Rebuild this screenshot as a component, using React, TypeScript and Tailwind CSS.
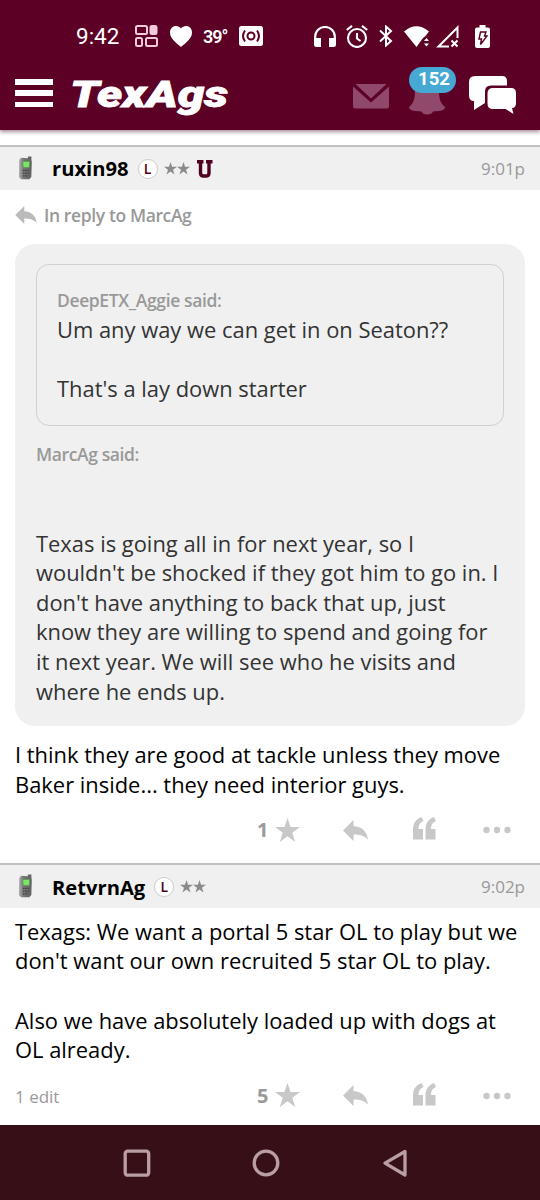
import type { ReactNode } from "react";

const BODY = "text-[21.92px] leading-[29.65px] whitespace-nowrap";
const LABEL = "text-[17.5px] tracking-[-0.38px] font-semibold text-[#999]";

function Phone() {
  return (
    <svg width="15" height="25" viewBox="0 0 16 26" className="mt-[-3px] shrink-0">
      <defs>
        <linearGradient id="case" x1="0" x2="1">
          <stop offset="0" stopColor="#b0b0b0" />
          <stop offset="0.35" stopColor="#777" />
          <stop offset="1" stopColor="#606060" />
        </linearGradient>
      </defs>
      <path d="M10.5 3V1.2h3.8V5l.4 2-.5 16L12 25.500H3.500L1 23.500 1.300 5l2-2.500z" fill="url(#case)" />
      <path d="M5 6.500h7.500l-.5 6.500H5.500z" fill="#7be567" stroke="#5d9153" strokeWidth=".8" />
      <path d="M5 16h7M5 19h7M5 22h6" stroke="#484848" strokeWidth="1.300" strokeDasharray="2 .6" />
    </svg>
  );
}

const STAR = "M12 0l2.900 8.700H24l-7.400 5.500 2.800 8.800-7.400-5.400L4.600 23l2.800-8.800L0 8.700h9.100z";

function Star({ size, color }: { size: number; color: string }) {
  return (
    <svg width={size} height={size} viewBox="0 0 24 24" fill={color} className="shrink-0">
      <path d={STAR} />
    </svg>
  );
}

function ReplyArrow({ className }: { className: string }) {
  return (
    <svg viewBox="0 0 25 21" className={className} fill="currentColor">
      <path d="M0 10.500L10.500 0v6C18.500 6.500 24 11 25 19.500c-4-4-8.500-5-14.500-5V21z" />
    </svg>
  );
}

interface HeaderProps {
  name: string;
  time: string;
  children?: ReactNode;
}

function PostHeader({ name, time, children }: HeaderProps) {
  return (
    <div className="flex h-[45px] items-center border-t-2 border-[#c0c0c0] bg-[#f0f0f0] pr-[15px] pl-[18px]">
      <Phone />
      <span className="ml-[19px] text-[20.200px] font-bold text-black">{name}</span>
      <span className="ml-[9px] flex size-[20px] items-center justify-center rounded-full border border-[#ccc] bg-white text-[14px] font-semibold text-[#500018]">
        L
      </span>
      <div className="ml-[6px] flex">
        <Star size={13} color="#8b8b8b" />
        <Star size={13} color="#8b8b8b" />
      </div>
      {children}
      <span className="ml-auto text-[17px] text-[#999]">{time}</span>
    </div>
  );
}

function Actions({ count, edit }: { count: number; edit?: string }) {
  return (
    <div className="flex h-[30px] items-center pl-[15px] text-[#c8c8c8]">
      <span className="w-[242px] pt-[3px] text-[17px] text-[#999]">{edit}</span>
      <span className="w-[18px] text-[20px] font-bold text-[#999]">{count}</span>
      <Star size={25} color="#c8c8c8" />
      <ReplyArrow className="ml-[43px] h-[21px] w-[25px]" />
      <svg width="23" height="23" viewBox="0 0 23 23" fill="currentColor" className="mt-[-3px] ml-[45px]">
        <path d="M8.500 0l2 4C7 5.500 5.500 8 5.500 12H10v10.500H0V13C0 6 3 2 8.500 0zM21 0l2 4c-3.500 1.500-5 4-5 8h4.500v10.500h-10V13c0-7 3-11 8.500-13z" />
      </svg>
      <svg width="28" height="8" viewBox="0 0 28 8" fill="currentColor" className="ml-[47px]">
        <circle cx="3.500" cy="4" r="3.200" />
        <circle cx="14" cy="4" r="3.200" />
        <circle cx="24.500" cy="4" r="3.200" />
      </svg>
    </div>
  );
}

function StatusBar() {
  return (
    <div className="flex h-[72px] items-center pl-[76px] text-white">
      <span className="w-[59px] pt-[2px] font-[Roboto] text-[22.500px]">9:42</span>
      <svg width="23" height="23" viewBox="0 0 23 23" fill="none" stroke="#f3cbdc" strokeWidth="2">
        <rect x="1" y="1" width="11" height="8" rx="1.500" />
        <rect x="15.500" y="1" width="6" height="8" rx="1.500" fill="#f3cbdc" />
        <rect x="1" y="13" width="6" height="8" rx="1.500" />
        <rect x="11" y="13" width="11" height="8" rx="1.500" />
      </svg>
      <svg width="22" height="21" viewBox="0 0 23 21" preserveAspectRatio="none" fill="#fff" className="ml-[12px]">
        <path d="M11.500 21C6 16.500 0 12.500 0 6.500 0 2.500 3 0 6 0c2.500 0 4.500 1 5.500 2.500C12.500 1 14.500 0 17 0c3 0 6 2.500 6 6.500 0 6-6 10-11.500 14.500z" />
      </svg>
      <span className="ml-[11px] w-[26px] font-[Roboto] text-[18px] font-semibold tracking-[-1px]">39°</span>
      <svg width="24" height="20" viewBox="0 0 24 20" className="ml-[10px]">
        <rect width="24" height="20" rx="2.500" fill="#fff" />
        <g fill="none" stroke="#5c0025" strokeWidth="2">
          <circle cx="12" cy="10" r="3.500" />
          <path d="M6 4.500q-4 5.500 0 11M18 4.500q4 5.500 0 11" />
        </g>
      </svg>
      <svg width="22" height="21" viewBox="0 0 22 21" className="ml-[51px]">
        <path d="M1.200 14v-3.500a9.800 9.500 0 0 1 19.600 0V14" fill="none" stroke="#fff" strokeWidth="2.200" />
        <path d="M0 12h7v9H2.500Q0 21 0 18.500zM22 12h-7v9h4.500q2.500 0 2.500-2.500z" fill="#fff" />
      </svg>
      <svg width="22" height="23" viewBox="0 0 22 23" className="ml-[10px]" fill="none" stroke="#fff" strokeWidth="2.100">
        <circle cx="11" cy="13" r="9" />
        <path d="M.8 5L6 .9M21.200 5L16 .9M11 8v5.500l3.500 2.500" />
      </svg>
      <svg width="14" height="22" viewBox="0 0 14 22" className="ml-[11px]" fill="none" stroke="#fff" strokeWidth="2">
        <path d="M1 5.500l11 10.500-5 4.500V1.500L12 6 1 16.500" />
      </svg>
      <svg width="25" height="21" viewBox="0 0 25 21" className="ml-[11px]" fill="#fff">
        <path d="M0 5.500Q12.500-5 25 5.500L21.500 10 19 12l-6.500 9zM20 15l2.500-3 2.500 3zM20 17.500l2.500 3 2.500-3z" />
      </svg>
      <svg width="23" height="23" viewBox="0 0 23 23" className="ml-[7px]" fill="none" stroke="#fff" strokeWidth="2">
        <path d="M21.500 13V2.500L2.500 21.500H13M15.500 15.500l6 6M21.500 15.500l-6 6" />
      </svg>
      <svg width="15" height="23" viewBox="0 0 15 23" className="ml-[16px]">
        <path d="M4.500 0h6v2.500H13q2 0 2 2V21q0 2-2 2H2q-2 0-2-2V4.500q0-2 2-2h2.500z" fill="#fff" />
        <path d="M5.500 7h5.500l-1.500 4H12l-6.500 8.500 1-5.500H4z" fill="none" stroke="#5c0025" strokeWidth="1.400" />
      </svg>
    </div>
  );
}

function NavBar() {
  return (
    <div className="flex h-[58px] pt-[3px] pl-[15px]">
      <div className="mt-[4px] flex h-[28px] w-[38px] flex-col justify-between">
        <i className="h-[5.500px] bg-white" />
        <i className="h-[5.500px] bg-white" />
        <i className="h-[5.500px] bg-white" />
      </div>
      <svg width="170" height="48" viewBox="0 0 170 48" className="ml-[17px]">
        <text
          x="0"
          y="32"
          textLength="158"
          lengthAdjust="spacingAndGlyphs"
          fill="#fff"
          stroke="#fff"
          strokeWidth="0.8"
          className="font-[Roboto] text-[36px] font-black italic"
        >
          TexAgs
        </text>
      </svg>
      <svg width="36" height="25" viewBox="0 0 36 25" fill="#90486b" className="mt-[9px] ml-[113px]">
        <path d="M2.500 0h31L18 14.500zM0 2.500L18 18.500 36 2.500V22q0 2.500-2.500 2.500h-31Q0 24.500 0 22z" />
      </svg>
      <div className="relative ml-[20px] h-[42px] w-[36px]">
        <svg width="36" height="40" viewBox="0 0 36 40" fill="#90486b" className="absolute top-0 left-0">
          <path d="M18 3c8 0 12 5 12 12 0 8 1 13 6 17 0 3-3 4-12 4.500-1 4-10.500 4-11.500 0C3 36 0 35 0 32c5-4 6-9 6-17C6 8 10 3 18 3z" />
        </svg>
        <span className="absolute top-[-8px] left-[0px] flex h-[26px] w-[47px] items-center justify-center rounded-full bg-[#45a9d4] pl-[3px] font-[Roboto] text-[18.500px] font-bold text-white">
          152
        </span>
      </div>
      <svg width="48" height="40" viewBox="0 0 48 40" fill="#fff" className="mt-[1px] ml-[24px]">
        <path d="M6 0h27q5 0 5 5v4.500H22q-6 0-6 6V27l-11 7v-9Q0 25 0 19V6Q0 0 6 0z" />
        <path d="M24 12h18q5 0 5 5V27q0 5-4 5l1.500 6-8-5H24q-5.500 0-5.500-5.500v-10Q18.500 12 24 12z" />
      </svg>
    </div>
  );
}

export default function App() {
  return (
    <div className="flex h-[1200px] w-[540px] flex-col overflow-hidden bg-white font-['Open_Sans',sans-serif] text-black">
      <header className="h-[130px] shrink-0 bg-[#5c0025] shadow-[0_2px_4px_rgba(60,0,25,0.45)]">
        <StatusBar />
        <NavBar />
      </header>

      <main className="h-[995px] pt-[15px]">
        <PostHeader name="ruxin98" time="9:01p">
          <svg width="16" height="18" viewBox="0 0 16 18" className="ml-[7px]">
            <path d="M0 1.700h6.500M9 1.700H15.500M3.500 2v11q0 3 3 3h2.500q3 0 3-3V2" fill="none" stroke="#500020" strokeWidth="3.400" />
          </svg>
        </PostHeader>
        <div className={`flex h-[54px] items-center gap-[7px] pb-[4px] pl-[15px] ${LABEL}`}>
          <ReplyArrow className="h-[18px] w-[22px] text-[#bbb]" />
          In reply to MarcAg
        </div>
        <section className="mx-[15px] h-[482px] rounded-[20px] bg-[#f0f0f0] px-[21px] pt-[20px] text-[#333]">
          <div className="h-[162px] rounded-[13px] border-[1.500px] border-[#d0d0d0] px-[20px] pt-[21px]">
            <div className={`h-[29px] leading-[29px] ${LABEL}`}>DeepETX_Aggie said:</div>
            <p className={BODY}>
              Um any way we can get in on Seaton??
              <br />
              <br />
              That's a lay down starter
            </p>
          </div>
          <div className={`mt-[14px] h-[29px] leading-[29px] ${LABEL}`}>MarcAg said:</div>
          <p className={`mt-[59.500px] ${BODY}`}>
            Texas is going all in for next year, so I
            <br />
            wouldn't be shocked if they got him to go in. I
            <br />
            don't have anything to back that up, just
            <br />
            know they are willing to spend and going for
            <br />
            it next year. We will see who he visits and
            <br />
            where he ends up.
          </p>
        </section>
        <p className={`mt-[14px] ml-[15px] ${BODY}`}>
          I think they are good at tackle unless they move
          <br />
          Baker inside... they need interior guys.
        </p>
        <div className="mt-[16px] h-[48px]">
          <Actions count={1} />
        </div>
        <PostHeader name="RetvrnAg" time="9:02p" />
        <p className={`mt-[8.500px] ml-[15px] ${BODY}`}>
          Texags: We want a portal 5 star OL to play but we
          <br />
          don't want our own recruited 5 star OL to play.
          <br />
          <br />
          Also we have absolutely loaded up with dogs at
          <br />
          OL already.
        </p>
        <div className="mt-[15.500px]">
          <Actions count={5} edit="1 edit" />
        </div>
      </main>

      <footer className="flex h-[75px] shrink-0 bg-[#371017] pt-[23px] pl-[123px]">
        <svg width="28" height="30" viewBox="0 0 28 30" fill="none" stroke="#b99ea4" strokeWidth="3.300">
          <rect x="2.200" y="3.200" width="23.500" height="24" rx="2.500" />
        </svg>
        <svg width="28" height="30" viewBox="0 0 28 30" fill="none" stroke="#b99ea4" strokeWidth="3.300" className="ml-[101px]">
          <circle cx="14" cy="15" r="11.800" />
        </svg>
        <svg width="28" height="30" viewBox="0 0 28 30" fill="none" stroke="#b99ea4" strokeWidth="3.300" strokeLinejoin="round" className="ml-[101px]">
          <path d="M24 3.500v23.500L4 15.200z" />
        </svg>
      </footer>
    </div>
  );
}
